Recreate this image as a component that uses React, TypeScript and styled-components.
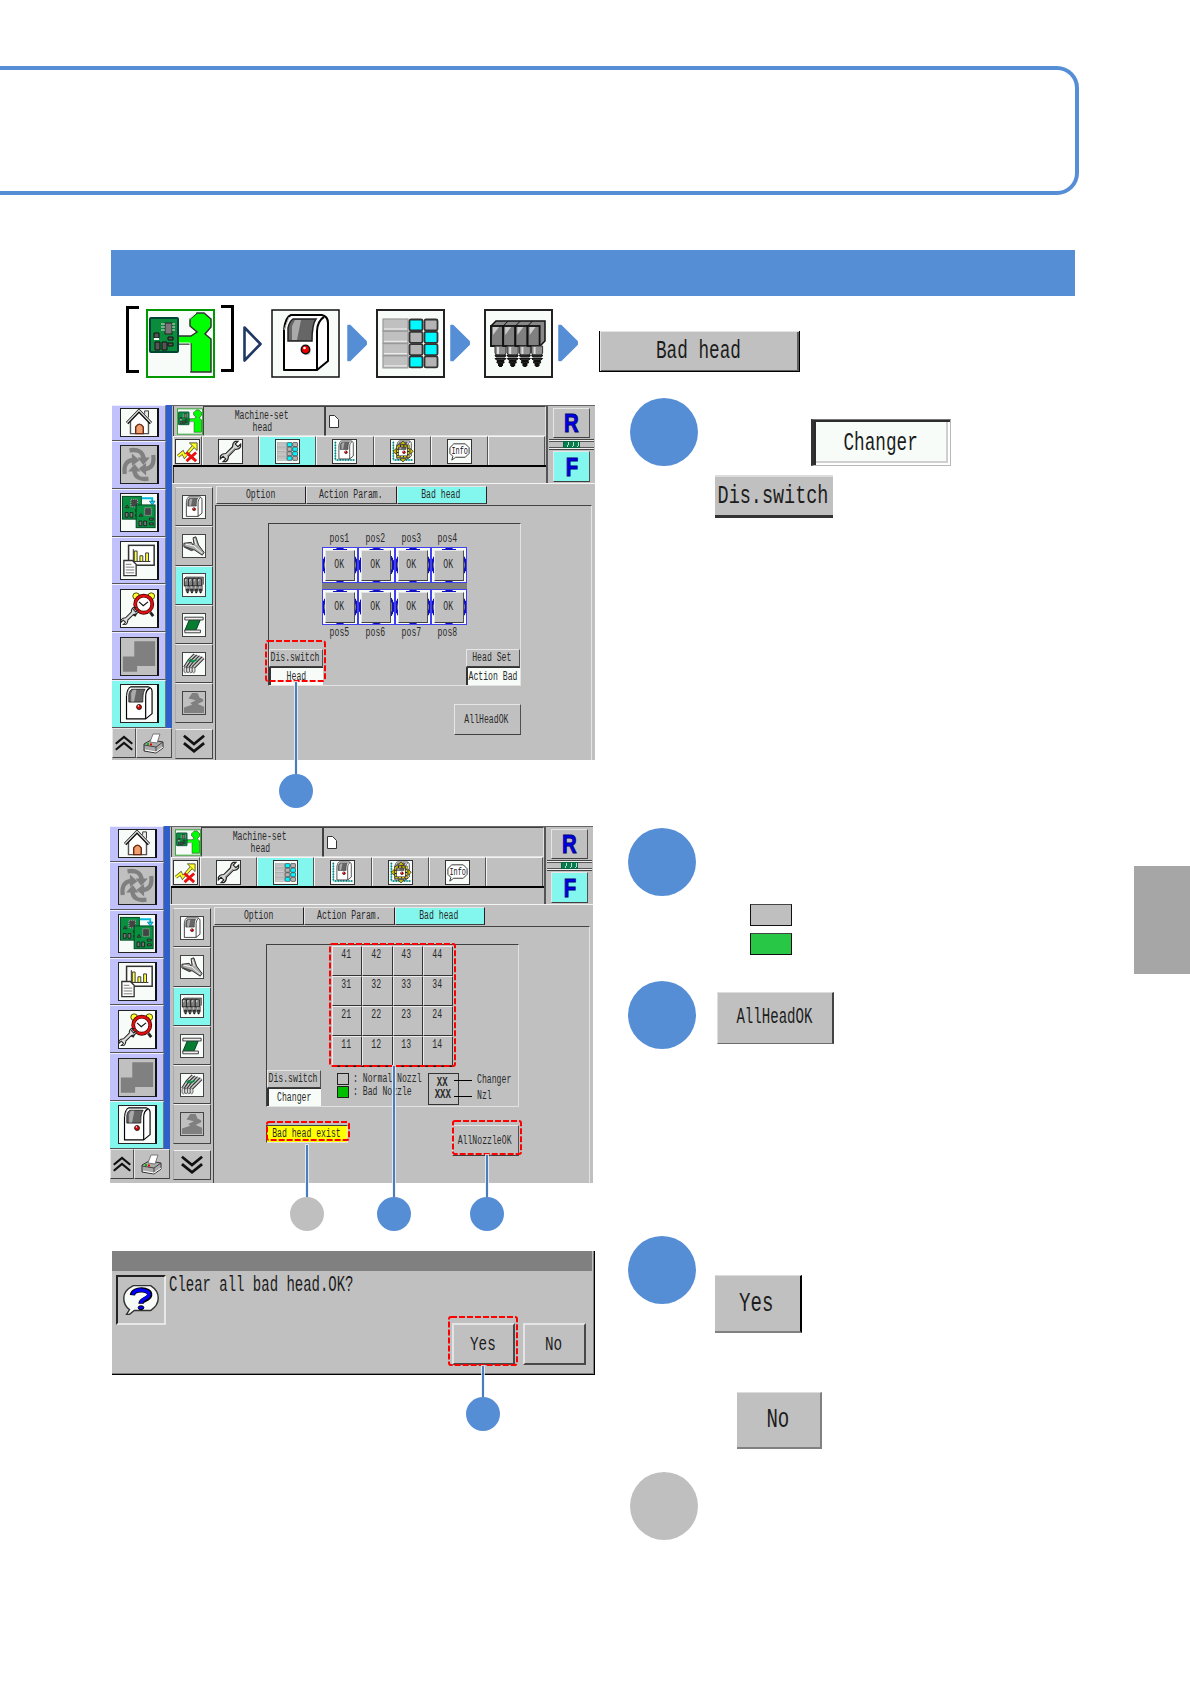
import React from "react";
import styled, { createGlobalStyle, css } from "styled-components";

const BLUE = "#558ed5";
const GRAY = "#c0c0c0";
const CYAN = "#83f7ee";
const LAVENDER = "#c1c1fb";
const WHITE = "#f7fcf8";

interface BoxProps {
  $w?: number;
  $h?: number;
  $ml?: number;
  $mt?: number;
}

interface ActiveProps {
  $active?: boolean;
}

const GlobalStyle = createGlobalStyle`
  * { box-sizing: border-box; }
  body { margin: 0; background: #fff; }
  svg { display: block; }
`;

const raised = css`
  border: 1px solid;
  border-color: #e6e6e6 #505050 #404040 #e6e6e6;
`;

const sunken = css`
  border: 1px solid;
  border-color: #404040 #e2e2e2 #e2e2e2 #404040;
`;

/* ---------- page ---------- */

const Page = styled.main`
  position: relative;
  width: 1190px;
  height: 1684px;
  padding-top: 66px;
  overflow: hidden;
  background: #fff;
`;

const TitleFrame = styled.header`
  width: 1079px;
  height: 129px;
  border: 4.5px solid ${BLUE};
  border-left: 0;
  border-radius: 0 22px 22px 0;
`;

const Banner = styled.div`
  width: 964px;
  height: 46px;
  margin: 55px 0 0 111px;
  background: ${BLUE};
`;

const Breadcrumb = styled.nav`
  display: flex;
  align-items: flex-start;
  height: 109px;
  padding: 9px 0 0 126px;
`;

const Crumb = styled.div<BoxProps>`
  flex: none;
  width: ${(p) => p.$w}px;
  height: ${(p) => p.$h}px;
  margin: ${(p) => p.$mt || 0}px 0 0 ${(p) => p.$ml || 0}px;
`;

const Bracket = styled.div<{ $right?: boolean }>`
  flex: none;
  width: 13px;
  height: 67px;
  margin-top: ${(p) => (p.$right ? 0 : 1)}px;
  margin-left: ${(p) => (p.$right ? 5.5 : 0)}px;
  border: 3px solid #000;
  border-left-width: ${(p) => (p.$right ? 0 : 3)}px;
  border-right-width: ${(p) => (p.$right ? 3 : 0)}px;
`;

const Columns = styled.div`
  display: flex;
`;

const Left = styled.section`
  width: 627.5px;
  padding-left: 110px;
`;

const Right = styled.section`
  flex: 1;
`;

const SideTab = styled.div`
  position: absolute;
  top: 866px;
  right: 0;
  width: 56px;
  height: 108px;
  background: #a6a6a6;
`;

/* ---------- text in the panel's narrow bitmap-like face ---------- */

const Mono = styled.span<{ $size?: number; $left?: boolean; $narrow?: number; $bold?: boolean }>`
  display: inline-block;
  font-family: "Liberation Mono", monospace;
  font-size: ${(p) => p.$size || 12}px;
  font-weight: ${(p) => (p.$bold ? 700 : 400)};
  line-height: 1;
  color: ${(p) => (p.$size ? "#1c1c1c" : "#2a2a2a")};
  white-space: pre;
  transform: translateX(${(p) => (p.$left ? 0 : -1)}px) scaleX(${(p) => p.$narrow || 0.68});
  transform-origin: ${(p) => (p.$left ? "left" : "center")};
`;

/* ---------- steps on the right ---------- */

const Step = styled.div<BoxProps>`
  display: flex;
  align-items: flex-start;
  height: ${(p) => p.$h}px;
  padding-left: ${(p) => p.$ml || 0}px;
`;

const Disc = styled.div<{ $gray?: boolean; $raise?: number }>`
  flex: none;
  width: 68px;
  height: 68px;
  margin-top: ${(p) => -(p.$raise || 0)}px;
  border-radius: 50%;
  background: ${(p) => (p.$gray ? "#bfbfbf" : BLUE)};
`;

const StepBody = styled.div<BoxProps>`
  display: flex;
  flex-direction: column;
  align-items: flex-start;
  padding: ${(p) => p.$mt || 0}px 0 0 ${(p) => p.$ml || 0}px;
`;

const Sample = styled.div<BoxProps & { $kind?: "full" | "flat" | "right" | "yes" | "no" | "in" }>`
  display: flex;
  flex: none;
  align-items: center;
  justify-content: center;
  width: ${(p) => p.$w}px;
  height: ${(p) => p.$h}px;
  margin: ${(p) => p.$mt || 0}px 0 0 ${(p) => p.$ml || 0}px;
  background: ${GRAY};
  ${(p) =>
    p.$kind === "full" &&
    css`
      border: solid #000;
      border-width: 0 1px 1px 1px;
      box-shadow: inset 1px 1px 0 #e4e4e4, inset -2px -1px 0 #606060;
    `}
  ${(p) =>
    p.$kind === "flat" &&
    css`
      border-top: 2px solid #dcdcdc;
      border-bottom: 3px solid #333;
    `}
  ${(p) =>
    p.$kind === "right" &&
    css`
      border: 1px solid #dedede;
      border-right: 2px solid #444;
      border-bottom: 1px solid #6c6c6c;
    `}
  ${(p) =>
    p.$kind === "yes" &&
    css`
      border-top: 1px solid #dcdcdc;
      border-right: 2px solid #000;
      border-bottom: 2px solid #808080;
    `}
  ${(p) =>
    p.$kind === "no" &&
    css`
      border-top: 1px solid #dcdcdc;
      border-right: 2px solid #808080;
      border-bottom: 2px solid #808080;
    `}
  ${(p) =>
    p.$kind === "in" &&
    css`
      background: ${WHITE};
      border: solid;
      border-width: 1px 1px 1px 3px;
      border-color: #777 #b8b8b8 #b8b8b8 #333;
      box-shadow: inset 2px 2px 0 #2c2c2c, inset -2px -2px 0 #fff, inset -4px -4px 0 #cfcfcf;
    `}
`;

const Swatch = styled.div<{ $green?: boolean }>`
  width: 42px;
  height: 22px;
  margin-bottom: 7px;
  border: 1px solid #111;
  border-top-color: #444;
  background: ${(p) => (p.$green ? "#28c846" : "#bfbfbf")};
`;

/* ---------- machine screen ---------- */

const Screen = styled.div<BoxProps>`
  position: relative;
  display: flex;
  width: 483px;
  height: ${(p) => p.$h}px;
  margin-left: ${(p) => p.$ml || 0}px;
  background: ${GRAY};
`;

const Sidebar = styled.aside`
  flex: none;
  display: flex;
  flex-direction: column;
  width: 60px;
  background: #2f5fc8;
`;

const SideItem = styled.div<ActiveProps & { $first?: boolean }>`
  flex: none;
  display: flex;
  align-items: ${(p) => (p.$first ? "flex-end" : "center")};
  width: 54px;
  height: ${(p) => (p.$first ? 36 : 47.8)}px;
  padding: ${(p) => (p.$first ? "0 0 3px 8px" : "0 0 0 8px")};
  background: ${(p) => (p.$active ? CYAN : LAVENDER)};
  border-top: 1px solid #eef;
  border-right: 1px solid #777;
  border-bottom: 1px solid #555;
`;

const SideIcon = styled.div<{ $dim?: boolean; $short?: boolean }>`
  display: flex;
  align-items: flex-end;
  width: 39px;
  height: ${(p) => (p.$short ? 29 : 39)}px;
  overflow: hidden;
  border: 1px solid #222;
  border-right: 2px solid #111;
  background: ${(p) => (p.$dim ? GRAY : WHITE)};
`;

const SideFooter = styled.div`
  display: flex;
  flex: 1;
  background: ${GRAY};
`;

const FooterKey = styled.div<BoxProps>`
  display: flex;
  align-items: center;
  justify-content: center;
  width: ${(p) => p.$w}px;
  height: 30px;
  ${raised}
`;

const Main = styled.div`
  flex: 1;
  display: flex;
  flex-direction: column;
`;

const Header = styled.div`
  display: flex;
  height: 79px;
  border-top: 1px solid #666;
  border-bottom: 1px solid #f4f4f4;
`;

const HeaderLeft = styled.div`
  width: 376px;
  padding-left: 1px;
  border-right: 2px solid #555;
`;

const TitleRow = styled.div`
  display: flex;
  height: 30px;
`;

const UserCell = styled.div`
  width: 30px;
  padding: 2px 0 0 3px;
  border-left: 1px solid #444;
`;

const NameCell = styled.div`
  display: flex;
  flex-direction: column;
  align-items: center;
  justify-content: center;
  width: 122px;
  padding: 1px 2px 0 0;
  ${sunken}
  border-right: 1px solid #444;
`;

const FileCell = styled.div`
  flex: 1;
  padding: 8px 0 0 3px;
  ${sunken}
`;

const MenuRow = styled.div`
  display: flex;
  height: 31px;
  border-bottom: 2px solid #000;
`;

const MenuCell = styled.div<ActiveProps & BoxProps>`
  flex: none;
  display: flex;
  justify-content: center;
  width: ${(p) => p.$w || 57.2}px;
  padding-top: 2px;
  background: ${(p) => (p.$active ? CYAN : GRAY)};
  border-left: 1px solid #f4f4f4;
  border-top: 1px solid #f4f4f4;
  border-right: 1px solid #555;
`;

const IconFrame = styled.div`
  width: 25px;
  height: 25px;
  border: 1px solid #333;
  background: ${WHITE};
`;

const MessageRow = styled.div`
  height: 16px;
  border-left: 1px solid #333;
`;

const ModeColumn = styled.div`
  width: 47px;
  padding: 2px 0 0 5px;
`;

const ModeKey = styled.div<ActiveProps>`
  display: flex;
  align-items: center;
  justify-content: center;
  width: 37px;
  height: ${(p) => (p.$active ? 31 : 30)}px;
  background: ${(p) => (p.$active ? CYAN : GRAY)};
  ${raised}
`;

const ModeLetter = styled.span`
  font: 700 26px/1 "Liberation Sans", sans-serif;
  color: #0000f0;
  -webkit-text-stroke: 1px #00007a;
  transform: scaleX(0.78);
`;

const LinkStrip = styled.div`
  display: flex;
  align-items: center;
  justify-content: center;
  width: 45px;
  height: 11px;
  margin: 1px 0 1px -4px;
  border: solid #444;
  border-width: 1px 0;
  box-shadow: inset 0 1px #eee, inset 0 2px #555, inset 0 -1px #eee, inset 0 -2px #555;
`;

const LinkChip = styled.i`
  width: 17px;
  height: 7px;
  border: 1px solid #064;
  background: repeating-linear-gradient(100deg, #0a7d50 0 4px, #b8e2c8 4px 5px);
`;

const Body = styled.div`
  flex: 1;
  display: flex;
`;

const SubNav = styled.div`
  width: 43px;
  padding: 3px 2px 0 3px;
`;

const SubItem = styled.div<ActiveProps>`
  display: flex;
  align-items: center;
  justify-content: center;
  height: 39.3px;
  background: ${(p) => (p.$active ? CYAN : GRAY)};
  border: 1px solid;
  border-color: #f0f0f0 #444 #444 #aaa;
`;

const SubIcon = styled.div<{ $dim?: boolean }>`
  width: 24px;
  height: 24px;
  border: 1px solid #444;
  background: ${(p) => (p.$dim ? GRAY : WHITE)};
`;

const ScrollKey = styled(SubItem)`
  height: 30px;
  margin-top: 6px;
`;

const Content = styled.div`
  flex: 1;
  display: flex;
  flex-direction: column;
  padding-right: 3px;
`;

const Tabs = styled.div`
  display: flex;
  height: 21px;
  padding: 2px 0 0 1px;
`;

const Tab = styled.div<ActiveProps>`
  display: flex;
  align-items: center;
  justify-content: center;
  width: 90.4px;
  height: 18px;
  background: ${(p) => (p.$active ? CYAN : GRAY)};
  ${raised}
  border-right-color: #222;
`;

const TabPanel = styled.div`
  flex: 1;
  padding: 17px 0 0 52px;
  border-top: 1px solid #444;
  border-left: 1px solid #444;
  border-right: 1px solid #e4e4e4;
`;

const Frame = styled.div`
  display: flex;
  flex-direction: column;
  justify-content: space-between;
  width: 253px;
  height: 163px;
  ${sunken}
`;

const HeadBlock = styled.div`
  width: 145px;
  margin: 7px 0 0 53px;
`;

const PosRow = styled.div`
  display: grid;
  grid-template-columns: repeat(4, 1fr);
  height: 16px;
  place-items: center;
`;

const HeadRow = styled.div`
  display: grid;
  grid-template-columns: repeat(4, 1fr);
`;

const HeadGap = styled.div`
  height: 6px;
  background: #808080;
`;

const HeadCell = styled.div`
  display: flex;
  align-items: center;
  justify-content: center;
  height: 36px;
  border: 1px solid #4040f0;
  background:
    radial-gradient(ellipse 19px 18px at center, #808080 0 15.5px, #1010c0 16px 17.6px, transparent 18px),
    ${WHITE};
`;

const HeadKey = styled.div`
  display: flex;
  align-items: center;
  justify-content: center;
  width: 30px;
  height: 31px;
  background: ${GRAY};
  ${raised}
`;

const FrameFooter = styled.div`
  display: flex;
  align-items: flex-end;
  height: 37px;
`;

const Switch = styled.div<{ $end?: boolean }>`
  flex: none;
  width: 54px;
  margin-left: ${(p) => (p.$end ? "auto" : 0)};
`;

const SwitchTop = styled.div`
  display: flex;
  align-items: center;
  justify-content: center;
  height: 18px;
  ${raised}
`;

const SwitchBottom = styled.div`
  display: flex;
  align-items: center;
  justify-content: center;
  height: 18px;
  background: ${WHITE};
  border-top: 1px solid #333;
  border-left: 2px solid #333;
`;

const NozzleGrid = styled.div`
  display: grid;
  grid-template-columns: repeat(4, 1fr);
  grid-auto-rows: 1fr;
  width: 121px;
  height: 121px;
  margin: 1px 0 0 65px;
  border-bottom: 1px solid #000;
`;

const Nozzle = styled.div`
  display: flex;
  justify-content: center;
  padding-top: 2px;
  border: 1px solid;
  border-color: #eaeaea #333 #333 #eaeaea;
`;

const Legend = styled.div`
  flex: none;
  display: flex;
  flex-direction: column;
  gap: 1px;
  width: 91px;
  height: 33px;
  margin-left: 16px;
`;

const LegendRow = styled.div`
  display: flex;
  align-items: center;
  height: 12px;
  white-space: nowrap;
`;

const LegendBox = styled.i<{ $green?: boolean }>`
  flex: none;
  width: 12px;
  height: 12px;
  margin-right: 4px;
  border: 1px solid #222;
  background: ${(p) => (p.$green ? "#00bf00" : GRAY)};
`;

const KeyBox = styled.div`
  flex: none;
  display: flex;
  flex-direction: column;
  align-items: center;
  justify-content: center;
  width: 31px;
  height: 32px;
  margin-bottom: 1px;
  border: 1px solid #333;
`;

const KeyNames = styled.div`
  flex: none;
  width: 58px;
  height: 34px;
`;

const KeyName = styled.div`
  display: flex;
  align-items: center;
  height: 16px;
  white-space: nowrap;

  &::before {
    content: "";
    flex: none;
    width: 18px;
    height: 1px;
    margin: 0 5px 0 -5px;
    background: #000;
  }
`;

const Actions = styled.div`
  display: flex;
  align-items: flex-start;
  justify-content: space-between;
  width: 253px;
  padding-top: 18px;
`;

const Warning = styled.div`
  display: flex;
  align-items: center;
  justify-content: center;
  width: 82px;
  height: 18px;
  background: #ff0;
  ${sunken}
`;

const ActionKey = styled.div`
  display: flex;
  align-items: center;
  justify-content: center;
  width: 67px;
  height: 31px;
  margin-left: auto;
  ${raised}
`;

/* ---------- dialog ---------- */

const Dialog = styled.div`
  position: relative;
  display: flex;
  flex-direction: column;
  width: 483px;
  height: 124px;
  margin: 68px 0 0 2px;
  background: ${GRAY};
  border-right: 1px solid #000;
  border-bottom: 1px solid #000;
  box-shadow: inset -1px -1px 0 #808080;
`;

const DialogBar = styled.div`
  width: 480px;
  height: 20px;
  background: #808080;
`;

const DialogBody = styled.div`
  display: flex;
  padding: 4px 0 0 4px;
`;

const DialogIcon = styled.div`
  width: 50px;
  height: 50px;
  margin-right: 3px;
  border: 2px solid;
  border-color: #222 #e8e8e8 #e8e8e8 #222;
`;

const DialogKeys = styled.div`
  display: flex;
  justify-content: flex-end;
  gap: 8px;
  margin: -2px 8px 0 0;
`;

const DialogKey = styled.div`
  display: flex;
  align-items: center;
  justify-content: center;
  width: 63px;
  height: 42px;
  border: 2px solid;
  border-color: #e4e4e4 #484848 #484848 #e4e4e4;
`;

/* ---------- callouts lying over the screens ---------- */

interface PlaceProps extends BoxProps {
  $x: number;
  $y: number;
}

const Highlight = styled.svg<PlaceProps>`
  position: absolute;
  left: ${(p) => p.$x}px;
  top: ${(p) => p.$y}px;
  width: ${(p) => p.$w}px;
  height: ${(p) => p.$h}px;
`;

const Leader = styled.div<PlaceProps & { $gray?: boolean }>`
  position: absolute;
  left: ${(p) => p.$x - 17}px;
  top: ${(p) => p.$y}px;
  display: flex;
  flex-direction: column;
  align-items: center;
  width: 34px;

  &::before {
    content: "";
    width: 2px;
    height: ${(p) => p.$h}px;
    background: #4a7ebb;
    box-shadow: 0 0 0 1px rgba(235, 240, 248, 0.8);
  }

  &::after {
    content: "";
    width: 34px;
    height: 34px;
    border-radius: 50%;
    background: ${(p) => (p.$gray ? "#bfbfbf" : BLUE)};
  }
`;

function Marker({ x, y, w, h }: { x: number; y: number; w: number; h: number }) {
  return (
    <Highlight $x={x} $y={y} $w={w} $h={h}>
      <rect x="1" y="1" width={w - 2} height={h - 2} rx="2" fill="none" stroke="#f00" strokeWidth="2" strokeDasharray="6 2" />
    </Highlight>
  );
}

/* ---------- icons ---------- */

const Icon = ({ children, box = 64, inset = 0 }: { children: React.ReactNode; box?: number; inset?: number }) => (
  <svg width="100%" height="100%" viewBox={`${inset} ${inset} ${box - 2 * inset} ${box - 2 * inset}`}>
    {children}
  </svg>
);

const OperatorIcon = () => (
  <Icon box={69}>
    <rect x="1" y="1" width="67" height="67" fill={WHITE} stroke="#009a00" strokeWidth="2" />
    <path d="M32 27h13l6-4-7-6v-7l7-6h7l7 6v8l-6 7 6 5v33H45V35H32z" fill="#0f0" stroke="#333" strokeWidth="1.5" />
    <path d="M43.500 10l6.500-6M32 34h12v28" fill="none" stroke="#fff" strokeWidth="1" />
    <rect x="4" y="9" width="28" height="34" rx="1" fill="#0a8c3c" stroke="#043" strokeWidth="2" />
    <rect x="19" y="14" width="7" height="11" fill="#777" stroke="#222" />
    <path d="M15 15h4m-4 3h4m-4 3h4m7-6h3m-3 3h3m-3 3h3" stroke="#ddd" />
    <path d="M8 24h5v5H8zM9 33h5v8H9zm7 0h5v8h-5zM22 28h5v3h-5zm0 6h5v3h-5z" fill="#555" stroke="#111" />
    <path d="M8 30h5" stroke="#fff" strokeWidth="2" />
  </Icon>
);

const MachineShape = () => (
  <>
    <path d="M13 61V21C14 12 17 7 20 6h31c4 1 6 4 6 8v38L46 61z" fill="#fff" stroke="#000" strokeWidth="2" strokeLinejoin="round" />
    <path d="M46 61V22c0-6 3-12 7-14" fill="none" stroke="#000" strokeWidth="2" />
    <path d="M17 32V19c1-5 2-7 5-9h23c-3 4-4 9-4 22z" fill="#666" stroke="#222" strokeWidth="1.5" />
    <path d="M21 31V17l3-6h6l-4 20z" fill="#aaa" />
    <path d="M13 21l5-13" stroke="#aaa" strokeWidth="1" />
    <circle cx="35.500" cy="42" r="4" fill="#bbb" />
    <circle cx="34.500" cy="40.500" r="4.2" fill="#e00" stroke="#111" strokeWidth="1.5" />
    <circle cx="33.500" cy="39" r="1.3" fill="#fff" />
  </>
);

const MachineIcon = ({ framed }: { framed?: boolean }) => (
  <Icon box={69} inset={framed ? 0 : 3.5}>
    {framed && <rect x="1" y="1" width="67" height="67" fill={WHITE} stroke="#111" strokeWidth="1.5" />}
    <MachineShape />
  </Icon>
);

const TableIcon = ({ framed }: { framed?: boolean }) => (
  <Icon box={69} inset={framed ? 0 : 3.5}>
    {framed && <rect x="1" y="1" width="67" height="67" fill={WHITE} stroke="#222" strokeWidth="2" />}
    {[0, 1, 2, 3].map((r) => (
      <g key={r} transform={`translate(0 ${10 + r * 12.3})`}>
        <rect x="7" y="0" width="25" height="12" fill={GRAY} stroke="#999" strokeWidth="1.2" />
        <path d="M8 10h23" stroke="#f2f2f2" />
        <rect x="33.500" y="0.5" width="13" height="11" rx="1.5" fill={r === 0 || r === 3 ? "#00f8ff" : "#b4b4b4"} stroke="#333" strokeWidth="1.8" />
        <rect x="48.500" y="0.5" width="13" height="11" rx="1.5" fill={r === 1 || r === 2 ? "#00f8ff" : "#b4b4b4"} stroke="#333" strokeWidth="1.8" />
      </g>
    ))}
  </Icon>
);

const HeadsIcon = ({ framed }: { framed?: boolean }) => (
  <Icon box={69} inset={framed ? 0 : 3.5}>
    {framed && <rect x="1" y="1" width="67" height="67" fill={WHITE} stroke="#222" strokeWidth="2" />}
    <path d="M7 17l5-5h49v20l-5 5H7z" fill="#888" stroke="#111" strokeWidth="1.5" />
    {[0, 1, 2, 3].map((i) => (
      <g key={i} transform={`translate(${7 + i * 12.2} 0)`}>
        <rect x="0" y="17" width="12" height="20" fill="#808080" stroke="#111" strokeWidth="1.8" />
        <path d="M2 26l6-8H2z" fill="#ccc" />
        <path d="M0 17l5-5" stroke="#111" />
        <path d="M4 37h11v7l-2 3H6l-2-3z" fill="#909090" stroke="#333" />
        <path d="M7 38v7" stroke="#ddd" strokeWidth="2" />
        <path d="M4 46h11l-1 2h-9zM4 49.500h11l-2 2H6zM6 52.500h7v1.500H6z" fill="#333" stroke="#111" />
        <path d="M7 54h5v3h-1v1H8v-1H7z" fill="#111" />
      </g>
    ))}
  </Icon>
);

const HomeIcon = () => (
  <Icon box={38}>
    <path d="M10 22v14h19V22L19.500 12z" fill="#fff" stroke="#555" strokeWidth="1.5" />
    <path d="M25 15v-3h4v7" fill="#eee" stroke="#333" />
    <path d="M6.500 25L19 12l12.500 13" fill="none" stroke="#111" strokeWidth="3.500" />
    <path d="M6.500 24.500L19 11.500l12.500 13" fill="none" stroke="#eee" strokeWidth="1.2" />
    <path d="M15.500 36V29q4-6 8 0v7z" fill="#f0a070" stroke="#6b2a10" strokeWidth="1.5" />
  </Icon>
);

const RecycleIcon = () => (
  <Icon box={38}>
    {[0, 90, 180, 270].map((a) => (
      <g key={a} transform={`rotate(${a} 19 19)`}>
        <path d="M9 4q14-2 15 9" fill="none" stroke="#808080" strokeWidth="4.500" />
        <path d="M17.500 11.500h13l-7 8z" fill="#808080" />
      </g>
    ))}
  </Icon>
);

const Board = ({ x, y }: { x: number; y: number }) => (
  <g transform={`translate(${x} ${y})`}>
    <rect width="20" height="24" fill="#089040" stroke="#042" />
    <rect x="9" y="3" width="7" height="8" fill="#444" stroke="#bbb" strokeDasharray="1 1" />
    <path d="M3 17h3v5H3zm5 0h3v5H8zm6-3h4v2h-4zm0 5h4v2h-4z" fill="#777" stroke="#111" strokeWidth=".8" />
    <path d="M3 12l2-3 2 3z" fill="#555" stroke="#111" strokeWidth=".6" />
  </g>
);

const BoardsIcon = () => (
  <Icon box={38}>
    <Board x={1.5} y={2} />
    <Board x={16} y={11} />
    <path d="M22 4h11v4" fill="none" stroke="#0bd" strokeWidth="2" />
    <path d="M30 7h6l-3 4z" fill="#0df" stroke="#046" strokeWidth=".6" />
  </Icon>
);

const ChartIcon = () => (
  <Icon box={38}>
    <rect x="8" y="3" width="27" height="21" fill="#fff" stroke="#333" strokeWidth="1.6" />
    <path d="M13 7v13h18" fill="none" stroke="#222" />
    <path d="M14 9h3v11h-3zM20 14h3v6h-3zM26 11h3v9h-3z" fill="#ff4" stroke="#333" />
    <path d="M3 19h9l4 4v12H3z" fill="#fff" stroke="#333" strokeWidth="1.4" />
    <path d="M5 23h6m-6 3h9m-9 3h9m-9 3h9" stroke="#777" />
  </Icon>
);

const ClockIcon = () => (
  <Icon box={38}>
    <path d="M16 23l-2 4M31 23l3 4" stroke="#222" strokeWidth="3" />
    <circle cx="16" cy="6" r="3.500" fill="#ff3" stroke="#440" />
    <circle cx="32" cy="6" r="3.500" fill="#ff3" stroke="#440" />
    <circle cx="24" cy="14.500" r="9" fill="#fff" stroke="#400" strokeWidth="4" />
    <circle cx="24" cy="14.500" r="9" fill="none" stroke="#e01010" strokeWidth="2.500" />
    <path d="M19 12l4.500 4 5-4" fill="none" stroke="#111" strokeWidth="1.3" />
    <g transform="translate(9 27) rotate(45)">
      <path d="M-2-5v10q-3 3-2 6l2 2v-4h4v4l2-2q1-3-2-6V-5q3-3 2-6l-2-2v4h-4v-4l-2 2q-1 3 2 6z" fill="#ddd" stroke="#222" strokeWidth="1.2" transform="scale(.85)" />
    </g>
  </Icon>
);

const SquaresIcon = () => (
  <Icon box={38}>
    <path d="M14 3h22v26H17v6H2V19h12z" fill="#808080" />
  </Icon>
);

const Chevrons = ({ down }: { down?: boolean }) => (
  <svg width={down ? 24 : 18} height={down ? 22 : 20} viewBox="0 0 24 24">
    <g transform={down ? undefined : "rotate(180 12 12)"} fill="none" stroke="#111" strokeWidth="3">
      <path d="M1 3l11 9L23 3" />
      <path d="M1 11l11 9 11-9" />
    </g>
  </svg>
);

const PrinterIcon = () => (
  <svg width="24" height="24" viewBox="0 0 24 24">
    <path d="M2 13l7-4 12 2v6l-7 5-12-2z" fill="#aaa" stroke="#333" />
    <path d="M2 14l12 2 7-5M14 16v6" fill="none" stroke="#444" />
    <path d="M8 11L11 3h7l-3 9z" fill="#fff" stroke="#777" />
    <path d="M5 13h2" stroke="#0b0" strokeWidth="2" />
    <path d="M8 13.500h2" stroke="#e00" strokeWidth="2" />
    <path d="M3 19l11 2 7-5" stroke="#fff" fill="none" />
  </svg>
);

const WrenchIcon = () => (
  <Icon box={24}>
    <g transform="translate(12 12) rotate(45)">
      <path d="M-2-5v10q-3 3-2 6l2 2v-4h4v4l2-2q1-3-2-6V-5q3-3 2-6l-2-2v4h-4v-4l-2 2q-1 3 2 6z" fill="#d8d8d8" stroke="#222" strokeWidth="1.2" />
      <path d="M1-6V6" stroke="#888" />
    </g>
  </Icon>
);

const TrendIcon = () => (
  <Icon box={24}>
    <path d="M2 17l5-4 2 4 9-10" fill="none" stroke="#553" strokeWidth="3.500" />
    <path d="M14 3h8v8z" fill="#ff2" stroke="#553" />
    <path d="M2 17l5-4 2 4 9-10" fill="none" stroke="#ff2" strokeWidth="2" />
    <path d="M11 13l10 9M21 13l-10 9" stroke="#e81010" strokeWidth="3" />
  </Icon>
);

const RulerMachineIcon = ({ gear }: { gear?: boolean }) => (
  <Icon box={69}>
    <path d="M7 4v56h58" fill="none" stroke="#0bb" strokeWidth="3" />
    <path d="M4 8h6M4 16h6M4 24h6M4 32h6M4 40h6M4 48h6M4 56h6M14 57v6M22 57v6M30 57v6M38 57v6M46 57v6M54 57v6M62 57v6" stroke="#144" strokeWidth="2" />
    <g transform="translate(5 -3) scale(.98)">
      <MachineShape />
    </g>
    {gear && (
      <>
        <path d="M20 18h32v32H20z" fill="none" stroke="#222" strokeWidth="7" />
        <path d="M20 18h32v32H20z" fill="none" stroke="#dcc800" strokeWidth="4" strokeDasharray="7 3" />
        <path d="M36 3l9 10H27zM36 66l9-10H27zM6 34l10-9v18zM67 34l-10-9v18z" fill="#dcc800" stroke="#222" strokeWidth="2" />
      </>
    )}
  </Icon>
);

const InfoIcon = () => (
  <Icon box={24}>
    <path d="M6 4h12l4 4v6l-4 4H8l-4 3 1-4-3-3V8z" fill="#fff" stroke="#333" />
    <text x="18" y="15" transform="scale(.68 1)" textAnchor="middle" fontFamily="Liberation Mono, monospace" fontSize="10.500" fill="#111">
      Info
    </text>
  </Icon>
);

const FileIcon = () => (
  <svg width="10" height="13" viewBox="0 0 10 13">
    <path d="M.5.5h5l4 4v8h-9z" fill="#fff" stroke="#333" />
  </svg>
);

const PincerIcon = () => (
  <Icon box={24}>
    <path d="M1 9l8-1 2 3 1-1-1-7 3-1 3 9 6 8-2 3-9-6-3 1-8-4z" fill="#aaa" stroke="#222" />
    <path d="M3 10l9 2 9 8M12.500 4l2 7" stroke="#fff" fill="none" />
    <path d="M2 13l9 3" stroke="#444" strokeWidth="1.5" />
  </Icon>
);

const BeltIcon = () => (
  <Icon box={24}>
    <path d="M7 6h12l-5 12H2z" fill="#087c30" stroke="#032" />
    <path d="M2 3.500h20v3H2zM2 17.500h17v3H2z" fill="#eee" stroke="#333" />
  </Icon>
);

const FeederIcon = () => (
  <Icon box={24}>
    {[0, 1, 2, 3].map((i) => (
      <g key={i}>
        <path d={`M${2 + i * 3} 16L${7 + i * 3} ${8 + i}L${13 + i * 3} ${2 + i}`} fill="none" stroke="#333" strokeWidth="4" />
        <path d={`M${2 + i * 3} 16L${7 + i * 3} ${8 + i}L${13 + i * 3} ${2 + i}`} fill="none" stroke="#c8c8c8" strokeWidth="1.800" />
        <ellipse cx={2.6 + i * 3} cy="18.500" rx="1.600" ry="3.2" fill="#ddd" stroke="#444" strokeWidth=".8" />
      </g>
    ))}
    <path d="M6 9l3-2M9 10l3-2M12 9l3-2" stroke="#094" strokeWidth="1.800" />
  </Icon>
);

const FigureIcon = () => (
  <Icon box={24}>
    <path d="M10 1h6l2 5 4 2v2l-6 3 7 3v7H1v-6l9-3-2-2 6-3-8-2z" fill="#808080" />
  </Icon>
);

const QuestionIcon = () => (
  <Icon box={48}>
    <path d="M16 9h18q8 5 8 13t-8 13H17l-5 4H9l3-5Q6 30 6 22T16 9z" fill={WHITE} stroke="#333" strokeWidth="1.5" />
    <path d="M15 19c1-8 19-7 18 0-1 5-9 4-9 9" fill="none" stroke="#000" strokeWidth="5.500" />
    <path d="M15.500 18.500c1-7 17-6 17 0-1 4-8.500 4-8.500 9" fill="none" stroke="#00f" strokeWidth="3.500" />
    <ellipse cx="24" cy="32" rx="3" ry="2" fill="#00f" stroke="#000" />
  </Icon>
);

const Arrow = ({ hollow }: { hollow?: boolean }) => (
  <svg width="20" height="38" viewBox="0 0 20 38">
    <path
      d={hollow ? "M1.500 2.500L17.500 19 1.500 35.500z" : "M1 1.500h2L19.200 17.500v3L3 36.500H1z"}
      fill={hollow ? "#fff" : BLUE}
      stroke={hollow ? "#1f3864" : BLUE}
      strokeWidth={hollow ? 2.6 : 1.5}
      strokeLinejoin="round"
    />
  </svg>
);

/* ---------- assembled parts ---------- */

const sideIcons = [RecycleIcon, BoardsIcon, ChartIcon, ClockIcon, SquaresIcon, MachineIcon];
const subIcons = [MachineIcon, PincerIcon, HeadsIcon, BeltIcon, FeederIcon, FigureIcon];

interface ScreenProps {
  offset: number;
  height: number;
  children: React.ReactNode;
  overlay: React.ReactNode;
}

function MachineScreen({ offset, height, children, overlay }: ScreenProps) {
  return (
    <Screen $ml={offset} $h={height}>
      <Sidebar>
        <SideItem $first>
          <SideIcon $short>
            <Crumb $w={36} $h={37}>
              <HomeIcon />
            </Crumb>
          </SideIcon>
        </SideItem>
        {sideIcons.map((Glyph, i) => (
          <SideItem key={i} $active={i === 5}>
            <SideIcon $dim={i === 0 || i === 4}>
              <Glyph />
            </SideIcon>
          </SideItem>
        ))}
        <SideFooter>
          <FooterKey $w={24}>
            <Chevrons />
          </FooterKey>
          <FooterKey $w={36}>
            <PrinterIcon />
          </FooterKey>
        </SideFooter>
      </Sidebar>
      <Main>
        <Header>
          <HeaderLeft>
            <TitleRow>
              <UserCell>
                <Crumb $w={26} $h={27}>
                  <OperatorIcon />
                </Crumb>
              </UserCell>
              <NameCell>
                <Mono>Machine-set</Mono>
                <Mono>head</Mono>
              </NameCell>
              <FileCell>
                <FileIcon />
              </FileCell>
            </TitleRow>
            <MenuRow>
              <MenuCell $w={29}>
                <IconFrame>
                  <TrendIcon />
                </IconFrame>
              </MenuCell>
              <MenuCell>
                <IconFrame>
                  <WrenchIcon />
                </IconFrame>
              </MenuCell>
              <MenuCell $active>
                <IconFrame>
                  <TableIcon />
                </IconFrame>
              </MenuCell>
              <MenuCell>
                <IconFrame>
                  <RulerMachineIcon />
                </IconFrame>
              </MenuCell>
              <MenuCell>
                <IconFrame>
                  <RulerMachineIcon gear />
                </IconFrame>
              </MenuCell>
              <MenuCell>
                <IconFrame>
                  <InfoIcon />
                </IconFrame>
              </MenuCell>
              <MenuCell />
            </MenuRow>
            <MessageRow />
          </HeaderLeft>
          <ModeColumn>
            <ModeKey>
              <ModeLetter>R</ModeLetter>
            </ModeKey>
            <LinkStrip>
              <LinkChip />
            </LinkStrip>
            <ModeKey $active>
              <ModeLetter>F</ModeLetter>
            </ModeKey>
          </ModeColumn>
        </Header>
        <Body>
          <SubNav>
            {subIcons.map((Glyph, i) => (
              <SubItem key={i} $active={i === 2}>
                <SubIcon $dim={i === 5}>
                  <Glyph />
                </SubIcon>
              </SubItem>
            ))}
            <ScrollKey>
              <Chevrons down />
            </ScrollKey>
          </SubNav>
          <Content>
            <Tabs>
              <Tab>
                <Mono>Option</Mono>
              </Tab>
              <Tab>
                <Mono>Action Param.</Mono>
              </Tab>
              <Tab $active>
                <Mono>Bad head</Mono>
              </Tab>
            </Tabs>
            <TabPanel>{children}</TabPanel>
          </Content>
        </Body>
      </Main>
      {overlay}
    </Screen>
  );
}

function HeadPanel() {
  return (
    <>
      <Frame>
        <HeadBlock>
          <PosRow>
            {[1, 2, 3, 4].map((n) => (
              <Mono key={n}>{`pos${n}`}</Mono>
            ))}
          </PosRow>
          <HeadRow>
            {[1, 2, 3, 4].map((n) => (
              <HeadCell key={n}>
                <HeadKey>
                  <Mono>OK</Mono>
                </HeadKey>
              </HeadCell>
            ))}
          </HeadRow>
          <HeadGap />
          <HeadRow>
            {[5, 6, 7, 8].map((n) => (
              <HeadCell key={n}>
                <HeadKey>
                  <Mono>OK</Mono>
                </HeadKey>
              </HeadCell>
            ))}
          </HeadRow>
          <PosRow>
            {[5, 6, 7, 8].map((n) => (
              <Mono key={n}>{`pos${n}`}</Mono>
            ))}
          </PosRow>
        </HeadBlock>
        <FrameFooter>
          <Switch>
            <SwitchTop>
              <Mono>Dis.switch</Mono>
            </SwitchTop>
            <SwitchBottom>
              <Mono>Head</Mono>
            </SwitchBottom>
          </Switch>
          <Switch $end>
            <SwitchTop>
              <Mono>Head Set</Mono>
            </SwitchTop>
            <SwitchBottom>
              <Mono>Action Bad</Mono>
            </SwitchBottom>
          </Switch>
        </FrameFooter>
      </Frame>
      <Actions>
        <ActionKey>
          <Mono>AllHeadOK</Mono>
        </ActionKey>
      </Actions>
    </>
  );
}

function NozzlePanel() {
  return (
    <>
      <Frame>
        <NozzleGrid>
          {[4, 3, 2, 1].map((row) =>
            [1, 2, 3, 4].map((col) => (
              <Nozzle key={`${row}${col}`}>
                <Mono>{`${row}${col}`}</Mono>
              </Nozzle>
            ))
          )}
        </NozzleGrid>
        <FrameFooter>
          <Switch>
            <SwitchTop>
              <Mono>Dis.switch</Mono>
            </SwitchTop>
            <SwitchBottom>
              <Mono>Changer</Mono>
            </SwitchBottom>
          </Switch>
          <Legend>
            <LegendRow>
              <LegendBox />
              <Mono $left>: Normal Nozzl</Mono>
            </LegendRow>
            <LegendRow>
              <LegendBox $green />
              <Mono $left>: Bad Nozzle</Mono>
            </LegendRow>
          </Legend>
          <KeyBox>
            <Mono $bold $narrow={0.75}>XX</Mono>
            <Mono $bold $narrow={0.75}>XXX</Mono>
          </KeyBox>
          <KeyNames>
            <KeyName>
              <Mono $left>Changer</Mono>
            </KeyName>
            <KeyName>
              <Mono $left>Nzl</Mono>
            </KeyName>
          </KeyNames>
        </FrameFooter>
      </Frame>
      <Actions>
        <Warning>
          <Mono>Bad head exist</Mono>
        </Warning>
        <ActionKey>
          <Mono>AllNozzleOK</Mono>
        </ActionKey>
      </Actions>
    </>
  );
}

const ScreenGap = styled.div`
  height: 66px;
`;

export default function App() {
  return (
    <Page>
      <GlobalStyle />
      <TitleFrame />
      <Banner />
      <Breadcrumb>
        <Bracket />
        <Crumb $w={69} $h={69} $ml={7} $mt={4}>
          <OperatorIcon />
        </Crumb>
        <Bracket $right />
        <Crumb $w={20} $h={38} $ml={9.5} $mt={19.5}>
          <Arrow hollow />
        </Crumb>
        <Crumb $w={69} $h={69} $ml={7.5} $mt={4}>
          <MachineIcon framed />
        </Crumb>
        <Crumb $w={20} $h={38} $ml={7} $mt={19}>
          <Arrow />
        </Crumb>
        <Crumb $w={69} $h={69} $ml={9} $mt={4}>
          <TableIcon framed />
        </Crumb>
        <Crumb $w={20} $h={38} $ml={5.5} $mt={19}>
          <Arrow />
        </Crumb>
        <Crumb $w={69} $h={69} $ml={13.5} $mt={4}>
          <HeadsIcon framed />
        </Crumb>
        <Crumb $w={20} $h={38} $ml={5.5} $mt={19}>
          <Arrow />
        </Crumb>
        <Sample $kind="full" $w={201} $h={41} $ml={20.5} $mt={26}>
          <Mono $size={26}>Bad head</Mono>
        </Sample>
      </Breadcrumb>

      <Columns>
        <Left>
          <MachineScreen
            offset={2}
            height={355}
            overlay={
              <>
                <Marker x={153} y={235} w={61} h={42} />
                <Leader $x={184} $y={277} $h={92} />
              </>
            }
          >
            <HeadPanel />
          </MachineScreen>
          <ScreenGap />
          <MachineScreen
            offset={0}
            height={357}
            overlay={
              <>
                <Marker x={219} y={117} w={127} h={124} />
                <Marker x={156} y={295} w={84} h={20} />
                <Marker x={342} y={294} w={70} h={35} />
                <Leader $x={197} $y={319} $h={52} $gray />
                <Leader $x={284} $y={240} $h={131} />
                <Leader $x={377} $y={329} $h={42} />
              </>
            }
          >
            <NozzlePanel />
          </MachineScreen>
          <Dialog>
            <DialogBar />
            <DialogBody>
              <DialogIcon>
                <QuestionIcon />
              </DialogIcon>
              <Mono $left $size={21.5} $narrow={0.65}>Clear all bad head.OK?</Mono>
            </DialogBody>
            <DialogKeys>
              <DialogKey>
                <Mono $size={21}>Yes</Mono>
              </DialogKey>
              <DialogKey>
                <Mono $size={21}>No</Mono>
              </DialogKey>
            </DialogKeys>
            <Marker x={336} y={65} w={70} h={50} />
            <Leader $x={371} $y={115} $h={31} />
          </Dialog>
        </Left>

        <Right>
          <Step $h={423} $ml={2}>
            <Disc $raise={7.5} />
            <StepBody $ml={17.5}>
              <Sample $kind="in" $w={140} $h={47} $ml={96} $mt={14}>
                <Mono $size={26}>Changer</Mono>
              </Sample>
              <Sample $kind="flat" $w={118} $h={43} $mt={9}>
                <Mono $size={26} $narrow={0.71}>Dis.switch</Mono>
              </Sample>
            </StepBody>
          </Step>
          <Step $h={153}>
            <Disc />
            <StepBody $ml={54} $mt={76}>
              <Swatch />
              <Swatch $green />
            </StepBody>
          </Step>
          <Step $h={254.5}>
            <Disc />
            <StepBody $ml={21.5} $mt={11}>
              <Sample $kind="right" $w={117} $h={52}>
                <Mono $size={22} $narrow={0.64}>AllHeadOK</Mono>
              </Sample>
            </StepBody>
          </Step>
          <Step $h={236.5} $ml={0.5}>
            <Disc />
            <StepBody $ml={19} $mt={39.5}>
              <Sample $kind="yes" $w={87} $h={58}>
                <Mono $size={28}>Yes</Mono>
              </Sample>
              <Sample $kind="no" $w={85} $h={57} $ml={22} $mt={59}>
                <Mono $size={28}>No</Mono>
              </Sample>
            </StepBody>
          </Step>
          <Step $h={68} $ml={2}>
            <Disc $gray />
          </Step>
        </Right>
      </Columns>
      <SideTab />
    </Page>
  );
}
